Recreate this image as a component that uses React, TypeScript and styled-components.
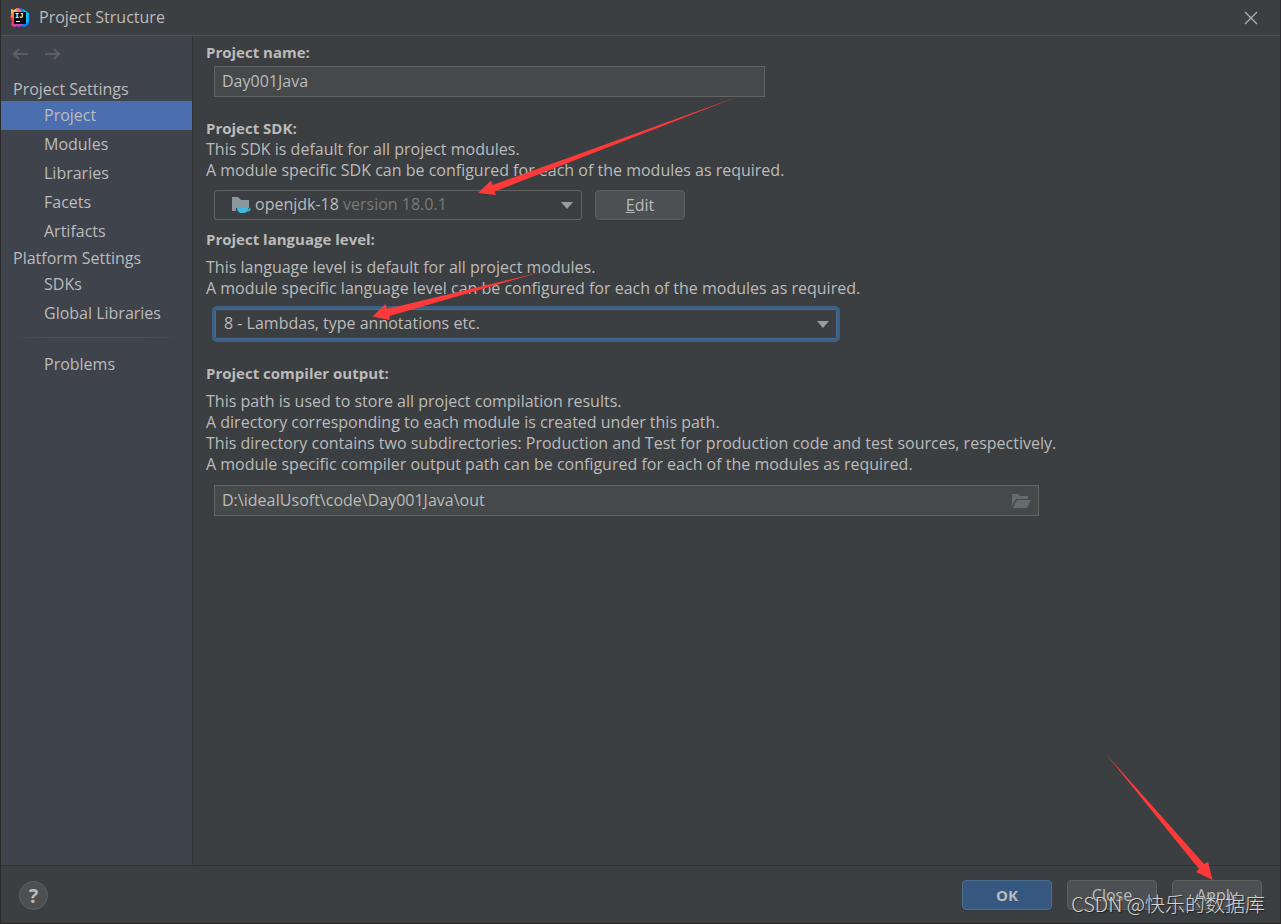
import React, { useState } from "react";
import styled, { createGlobalStyle } from "styled-components";

const GlobalStyle = createGlobalStyle`
  *, *::before, *::after { box-sizing: border-box; }
  body {
    margin: 0;
    background: #3c3f41;
    color: #bbbbbb;
    font: 16px/21px "Open Sans", "Noto Sans", sans-serif;
  }
  button, input, select { font: inherit; color: inherit; }
`;

const Dialog = styled.div`
  position: relative;
  display: flex;
  flex-direction: column;
  min-height: 100vh;
  border: 1px solid #2b2b2b;
  border-top: 0;
  background: #3c3f41;
`;

const TitleBar = styled.header`
  display: flex;
  align-items: center;
  height: 36px;
  padding: 0 20px 0 8px;
  border-bottom: 1px solid #515151;
`;

const Title = styled.h1`
  flex: 1;
  margin: 0 0 0 8px;
  font-size: 16px;
  font-weight: 400;
`;

const IconButton = styled.button`
  display: flex;
  padding: 0;
  border: 0;
  background: none;
  color: ${(p) => p.color || "#afb1b3"};
`;

const Body = styled.div`
  display: flex;
  flex: 1;
`;

const Sidebar = styled.nav`
  flex: 0 0 192px;
  border-right: 1px solid #323232;
  background: #3f434c;
`;

const History = styled.div`
  display: flex;
  gap: 16px;
  height: 41px;
  padding: 9px 10px;
`;

const GroupTitle = styled.h2`
  margin: 0;
  padding-left: 12px;
  font-size: 16px;
  font-weight: 400;
  line-height: 24px;
`;

const NavList = styled.ul`
  margin: 0;
  padding: 0;
  list-style: none;
`;

const NavLink = styled.a<{ $active?: boolean }>`
  display: block;
  padding-left: 43px;
  line-height: 29px;
  color: inherit;
  text-decoration: none;
  background: ${(p) => (p.$active ? "#4b6eaf" : "transparent")};
`;

const Divider = styled.hr`
  height: 1px;
  margin: 9px 8px 12px;
  border: 0;
  background: linear-gradient(90deg, transparent, #515459 30%, #515459 70%, transparent);
`;

const Content = styled.main`
  flex: 1;
  min-width: 0;
  padding: 6px 13px;
`;

const Section = styled.section`
  margin-bottom: ${(p: { $gap: number }) => p.$gap}px;
`;

const SectionLabel = styled.label`
  display: block;
  font-size: 15px;
  font-weight: 700;
`;

const Description = styled.p<{ $top?: number }>`
  margin: ${(p) => p.$top || 0}px 0 0;
`;

const Field = styled.div<{ $width: number; $top?: number }>`
  display: flex;
  align-items: center;
  width: 100%;
  max-width: ${(p) => p.$width}px;
  height: 31px;
  margin: ${(p) => p.$top || 0}px 0 0 8px;
  padding-right: 7px;
  border: 1px solid #646464;
  background: #45494a;
`;

const TextInput = styled.input`
  flex: 1;
  min-width: 0;
  height: 100%;
  padding: 0 7px 2px;
  border: 0;
  outline: 0;
  background: none;
`;

const Row = styled.div`
  display: flex;
  gap: 13px;
  margin: 9px 0 0 8px;
`;

const Combo = styled.div<{ $width: number; $focused?: boolean }>`
  display: grid;
  align-items: center;
  width: 100%;
  max-width: ${(p) => p.$width}px;
  height: ${(p) => (p.$focused ? 36 : 30)}px;
  margin: ${(p) => (p.$focused ? "7px 0 0 6px" : "0")};
  border: ${(p) => (p.$focused ? "3px solid #3d6185" : "1px solid #646464")};
  border-radius: ${(p) => (p.$focused ? 5 : 3)}px;
  box-shadow: ${(p) => (p.$focused ? "inset 0 0 0 1px #466d94" : "none")};
`;

const Select = styled.select<{ $inset: number }>`
  grid-area: 1 / 1;
  width: 100%;
  height: 100%;
  padding: 0 32px 2px ${(p) => p.$inset}px;
  border: 0;
  outline: 0;
  appearance: none;
  background: none;
  option { background: #3c3f41; }
`;

const ComboIcon = styled.span`
  display: flex;
  grid-area: 1 / 1;
  justify-self: start;
  padding-left: 16px;
  pointer-events: none;
`;

const ComboVersion = styled.span`
  grid-area: 1 / 1;
  justify-self: start;
  padding: 0 0 2px 128px;
  color: #787878;
  pointer-events: none;
`;

const ComboArrow = styled.span`
  grid-area: 1 / 1;
  justify-self: end;
  margin-right: 8px;
  border: 6px solid transparent;
  border-top: 7px solid #9a9da0;
  border-bottom: 0;
  pointer-events: none;
`;

const Button = styled.button<{ $primary?: boolean }>`
  flex: 0 0 90px;
  height: 30px;
  padding: 0;
  border: 1px solid ${(p) => (p.$primary ? "#4c708c" : "#5e6060")};
  border-radius: 4px;
  background: ${(p) => (p.$primary ? "#365880" : "#4c5052")};
  font-size: ${(p) => (p.$primary ? 15 : 16)}px;
  font-weight: ${(p) => (p.$primary ? 700 : 400)};
  box-shadow: 0 1px 1px #35383a;
`;

const Footer = styled.footer`
  display: flex;
  align-items: center;
  gap: 15px;
  padding: 14px 18px 13px;
  border-top: 1px solid #323232;
`;

const HelpButton = styled.button`
  width: 29px;
  height: 29px;
  margin-right: auto;
  padding: 0;
  border: 1px solid #5e6060;
  border-radius: 50%;
  background: #4c5052;
  font-size: 20px;
  font-weight: 700;
`;

const Annotation = styled.svg`
  position: absolute;
  top: 0;
  left: -1px;
  fill: #fd3a39;
  pointer-events: none;
`;

const ApplyAnnotation = styled.svg`
  position: absolute;
  right: 67px;
  bottom: 43px;
  fill: #fd3a39;
  pointer-events: none;
`;

const Watermark = styled.div`
  position: absolute;
  right: 15px;
  bottom: 4px;
  color: #d4d5d5;
  font: 300 20px/30px "Noto Sans CJK SC", sans-serif;
  text-shadow: 1px 1px 1px #222222;
  white-space: nowrap;
  pointer-events: none;
`;

const Logo = () => (
  <svg width="22" height="22" viewBox="0 0 22 22" aria-hidden="true">
    <path d="M11 1l5 2 4 3v11l-4 3-6-1z" fill="#087cfa" />
    <path d="M14 2l4 3 2 2-1 9-3-1z" fill="#07c3f2" />
    <path d="M2 2l3 1 3-2 4 3-3 4-5 2-2-2z" fill="#fdb45b" />
    <path d="M7 2l3-1 3 4-4 2z" fill="#fe6a8a" />
    <path d="M1 9l4-2 3 8-3 5-3-2 1-4z" fill="#fe315d" />
    <path d="M2 7l3-3 1 8-4-2z" fill="#fc801d" />
    <path d="M3 19l3-4 9 2-5 3-2-1-2 1z" fill="#c445b8" />
    <rect x="5" y="5" width="12" height="12" fill="#08070b" />
    <text x="6" y="11" fontSize="7" fontWeight="700" fontFamily="Liberation Mono" fill="#fff">IJ</text>
    <rect x="7" y="14" width="4" height="1" fill="#fff" />
  </svg>
);

const HistoryArrow = ({ forward }: { forward?: boolean }) => (
  <svg width="17" height="17" viewBox="0 0 17 17" fill="none" stroke="currentColor" strokeWidth="2" aria-hidden="true">
    <path d={forward ? "M1 9H16M10 4l5 5-5 5" : "M17 9H2M8 4L3 9l5 5"} />
  </svg>
);

const JdkIcon = () => (
  <svg width="20" height="18" viewBox="0 0 20 18" aria-hidden="true">
    <path d="M1 1h6l3 3h8v8H5v3H1z" fill="#8c979d" />
    <path d="M6 12h11v1c0 2-2 3-3 4H9c-2-1-3-3-3-5z" fill="#40b6e0" />
    <path d="M16 13h3q0 2-4 2" fill="none" stroke="#40b6e0" strokeWidth="1.2" />
  </svg>
);

const FolderIcon = () => (
  <svg width="20" height="16" viewBox="0 0 20 16" fill="#656c70" aria-hidden="true">
    <path d="M1 1h6l2 2h8v3H5L1 13z" />
    <path d="M6 7h14l-4 8H2z" />
  </svg>
);

const projectItems = ["Project", "Modules", "Libraries", "Facets", "Artifacts"];
const platformItems = ["SDKs", "Global Libraries"];

export default function App() {
  const [current, setCurrent] = useState("Project");
  const [name, setName] = useState("Day001Java");
  const [output, setOutput] = useState("D:\\ideaIUsoft\\code\\Day001Java\\out");

  const links = (items: string[]) => (
    <NavList>
      {items.map((item) => (
        <li key={item}>
          <NavLink href="#" $active={item === current} onClick={() => setCurrent(item)}>
            {item}
          </NavLink>
        </li>
      ))}
    </NavList>
  );

  return (
    <>
      <GlobalStyle />
      <Dialog>
        <TitleBar>
          <Logo />
          <Title>Project Structure</Title>
          <IconButton aria-label="Close window">
            <svg width="18" height="18" viewBox="0 0 18 18" fill="none" stroke="currentColor" strokeWidth="1.3">
              <path d="M3 3l12 12M15 3L3 15" />
            </svg>
          </IconButton>
        </TitleBar>
        <Body>
          <Sidebar>
            <History>
              <IconButton aria-label="Back" color="#5c5e60"><HistoryArrow /></IconButton>
              <IconButton aria-label="Forward" color="#5c5e60"><HistoryArrow forward /></IconButton>
            </History>
            <GroupTitle>Project Settings</GroupTitle>
            {links(projectItems)}
            <GroupTitle>Platform Settings</GroupTitle>
            {links(platformItems)}
            <Divider />
            {links(["Problems"])}
          </Sidebar>
          <Content>
            <Section $gap={21}>
              <SectionLabel htmlFor="name">Project name:</SectionLabel>
              <Field $width={551} $top={3}>
                <TextInput id="name" value={name} onChange={(e) => setName(e.target.value)} />
              </Field>
            </Section>
            <Section $gap={9}>
              <SectionLabel htmlFor="sdk">Project SDK:</SectionLabel>
              <Description>
                This SDK is default for all project modules.
                <br />A module specific SDK can be configured for each of the modules as required.
              </Description>
              <Row>
                <Combo $width={368}>
                  <ComboIcon><JdkIcon /></ComboIcon>
                  <Select id="sdk" $inset={40}><option>openjdk-18</option></Select>
                  <ComboVersion>version 18.0.1</ComboVersion>
                  <ComboArrow />
                </Combo>
                <Button><u>E</u>dit</Button>
              </Row>
            </Section>
            <Section $gap={21}>
              <SectionLabel htmlFor="level">Project language level:</SectionLabel>
              <Description $top={7}>
                This language level is default for all project modules.
                <br />A module specific language level can be configured for each of the modules as required.
              </Description>
              <Combo $width={628} $focused>
                <Select id="level" $inset={9}><option>8 - Lambdas, type annotations etc.</option></Select>
                <ComboArrow />
              </Combo>
            </Section>
            <Section $gap={0}>
              <SectionLabel htmlFor="output">Project compiler output:</SectionLabel>
              <Description $top={7}>
                This path is used to store all project compilation results.
                <br />A directory corresponding to each module is created under this path.
                <br />This directory contains two subdirectories: Production and Test for production code and test
                sources, respectively.
                <br />A module specific compiler output path can be configured for each of the modules as required.
              </Description>
              <Field $width={825} $top={10}>
                <TextInput id="output" value={output} onChange={(e) => setOutput(e.target.value)} />
                <IconButton aria-label="Browse"><FolderIcon /></IconButton>
              </Field>
            </Section>
          </Content>
        </Body>
        <Footer>
          <HelpButton aria-label="Help">?</HelpButton>
          <Button $primary>OK</Button>
          <Button>Close</Button>
          <Button>Apply</Button>
        </Footer>
        <Annotation width="760" height="330" viewBox="0 0 760 330" aria-hidden="true">
          <path d="M478 193L491 180.500 492.500 185 737 97 494.500 191.500 496 195z" />
          <path d="M372.500 316.500L385.500 304 387 309 541 272 389.500 316 389.500 320z" />
        </Annotation>
        <ApplyAnnotation width="107" height="126" viewBox="0 0 107 126" aria-hidden="true">
          <path d="M0 0L98 110 102 108 106.500 126 90 118 93 115z" />
        </ApplyAnnotation>
        <Watermark>CSDN @快乐的数据库</Watermark>
      </Dialog>
    </>
  );
}
